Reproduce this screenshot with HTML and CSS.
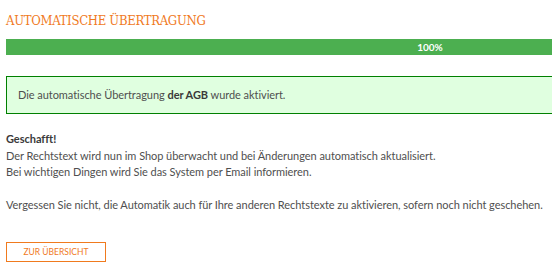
FILE: index.html
```html
<!DOCTYPE html>
<html lang="de">
<head>
<meta charset="utf-8">
<title>Automatische Übertragung</title>
<link rel="stylesheet" href="styles.css">
</head>
<body>
<div class="page">
  <h1 class="title">AUTOMATISCHE ÜBERTRAGUNG</h1>
  <div class="progress"><div class="progress-bar" style="width:100%">100%</div></div>
  <div class="alert">Die automatische Übertragung <strong>der AGB</strong> wurde aktiviert.</div>
  <div class="message">
    <p><strong>Geschafft!</strong><br>
    Der Rechtstext wird nun im Shop überwacht und bei Änderungen automatisch aktualisiert.<br>
    Bei wichtigen Dingen wird Sie das System per Email informieren.</p>
    <p>Vergessen Sie nicht, die Automatik auch für Ihre anderen Rechtstexte zu aktivieren, sofern noch nicht geschehen.</p>
  </div>
  <a class="btn" href="#">Zur Übersicht</a>
</div>
</body>
</html>
```
FILE: styles.css
```css
html, body {
  margin: 0;
  padding: 0;
  overflow: hidden;
  background: #fff;
}
.page {
  width: 848px;
  padding: 0 0 0 6px;
  font-family: "Lato", "Open Sans", sans-serif;
  font-size: 11px;
  letter-spacing: -0.05px;
  color: #4f4f4f;
}
.title {
  margin: 0;
  padding-top: 12px;
  height: 28px;
  box-sizing: border-box;
  font-family: "DejaVu Serif", serif;
  font-stretch: condensed;
  font-weight: normal;
  font-size: 13px;
  line-height: 18px;
  color: #f07a1e;
  letter-spacing: -0.3px;
}
.progress {
  height: 16px;
  background: #e9e9e9;
  margin-top: 11px;
}
.progress-bar {
  height: 16px;
  background: #4caf50;
  color: #fff;
  font-weight: bold;
  font-size: 10px;
  line-height: 16px;
  text-align: center;
}
.alert {
  margin-top: 21px;
  border: 1px solid #008000;
  background: #e0ffe0;
  padding: 10px 11px;
  line-height: 16px;
}
.alert strong { color: #3a3a3a; }
.message {
  margin-top: 17px;
  line-height: 16.5px;
}
.message p { margin: 0 0 16.5px; }
.message strong { color: #3a3a3a; }
.btn {
  display: inline-flex;
  align-items: center;
  justify-content: center;
  margin-top: 12px;
  width: 100px;
  height: 20px;
  box-sizing: border-box;
  border: 1px solid #f07a1e;
  color: #f07a1e;
  text-decoration: none;
  text-transform: uppercase;
  font-size: 8.5px;
  letter-spacing: 0;
}
```
